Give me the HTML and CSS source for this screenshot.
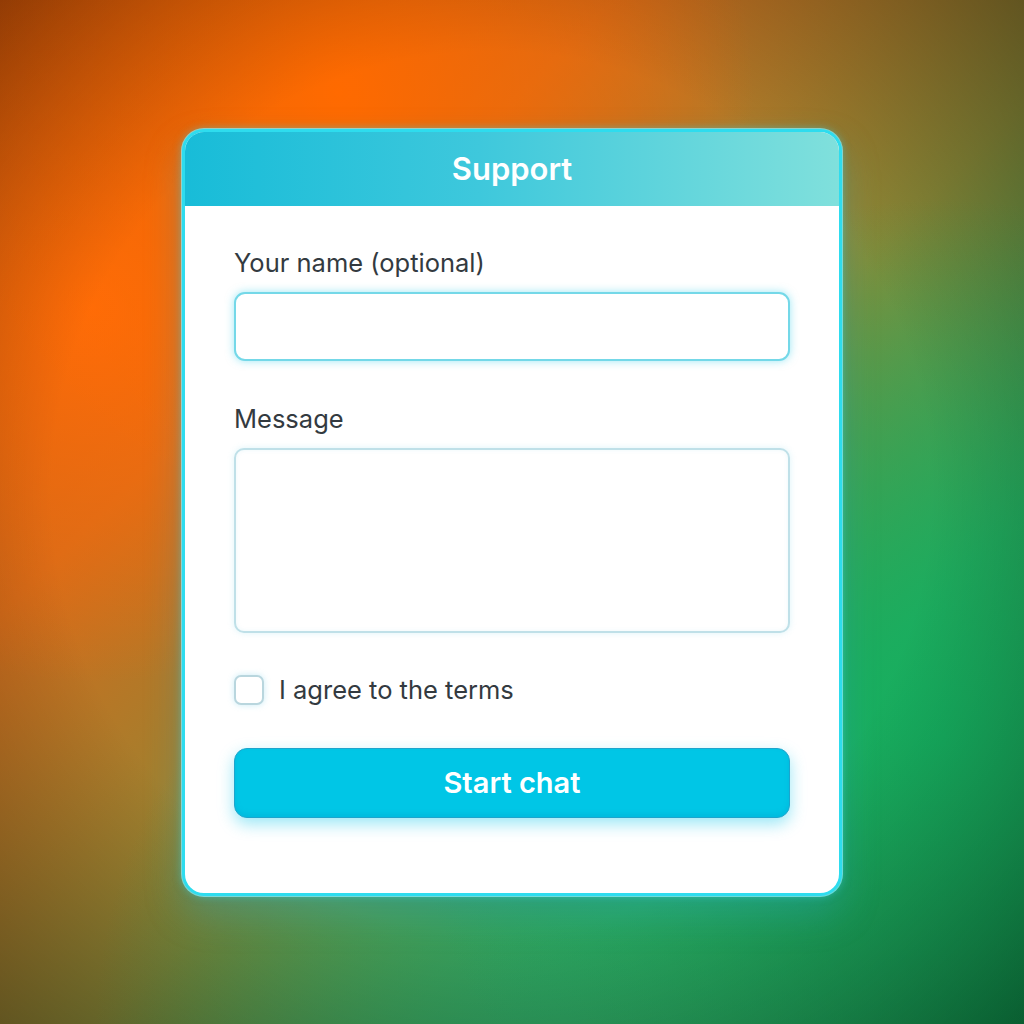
FILE: index.html
```html
<!DOCTYPE html>
<html lang="en">
<head>
<meta charset="utf-8">
<title>Support</title>
<link rel="stylesheet" href="styles.css">
</head>
<body>
<main class="stage">
  <section class="card">
    <header class="card-head">Support</header>
    <form class="card-body">
      <label class="field-label" for="name">Your name (optional)</label>
      <input class="input" id="name" type="text">
      <label class="field-label second" for="msg">Message</label>
      <textarea class="textarea" id="msg"></textarea>
      <label class="check-row">
        <span class="checkbox"></span>
        <span class="check-text">I agree to the terms</span>
      </label>
      <button class="btn" type="button">Start chat</button>
    </form>
  </section>
</main>
</body>
</html>
```
FILE: styles.css
```css
html, body {
  margin: 0;
  padding: 0;
  height: 100%;
}
body {
  font-family: Inter, "Noto Sans", "Liberation Sans", sans-serif;
}
.stage {
  width: 1024px;
  height: 1024px;
  display: flex;
  align-items: center;
  justify-content: center;
  background:
    radial-gradient(ellipse 78% 78% at 48% 48%, rgba(0,0,0,0) 55%, rgba(0,0,0,0.45) 100%),
    radial-gradient(circle at 33% 9%, #ff6a00 0, rgba(255,106,0,0) 36%),
    radial-gradient(circle at 9% 30%, #ff6c08 0, rgba(255,108,8,0) 32%),
    radial-gradient(circle at 92% 72%, #16b060 0, rgba(22,176,96,0) 45%),
    radial-gradient(circle at 55% 100%, #30a060 0, rgba(48,160,96,0) 40%),
    linear-gradient(135deg, #c85008 0%, #d06c1c 30%, #8a8a38 55%, #30a058 75%, #0a8a44 100%);
}
.card {
  width: 654px;
  height: 761px;
  border: 3px solid #2edcee;
  border-radius: 22px;
  background: #fff;
  overflow: hidden;
  box-sizing: content-box;
  box-shadow: 0 0 0 1px rgba(140,240,250,0.7), 0 0 8px rgba(60,220,240,0.5), 0 18px 36px rgba(40,160,190,0.35);
  display: flex;
  flex-direction: column;
}
.card-head {
  height: 74px;
  flex: none;
  display: flex;
  align-items: center;
  justify-content: center;
  color: #fff;
  font-size: 31px;
  font-weight: 600;
  background: linear-gradient(90deg, #18bcd8 0%, #3ec8dc 45%, #80e0dc 100%);
}
.card-body {
  display: flex;
  flex-direction: column;
  padding: 42px 49px 0 49px;
  margin: 0;
}
.field-label {
  font-size: 25.5px;
  line-height: 30px;
  color: #333a40;
  margin-bottom: 14px;
}
.field-label.second {
  margin-top: 43px;
}
.input {
  height: 69px;
  box-sizing: border-box;
  border: 2px solid #74d8e8;
  border-radius: 11px;
  background: #fff;
  box-shadow: 0 0 9px rgba(60,210,235,0.5);
  outline: none;
  font: inherit;
}
.textarea {
  height: 185px;
  box-sizing: border-box;
  border: 2px solid #bfe0e8;
  border-radius: 10px;
  background: #fff;
  box-shadow: 0 0 6px rgba(120,210,230,0.25), inset 0 0 4px rgba(120,200,220,0.15);
  resize: none;
  outline: none;
  font: inherit;
}
.check-row {
  margin-top: 42px;
  display: flex;
  align-items: center;
  gap: 15px;
  height: 30px;
}
.checkbox {
  width: 30px;
  height: 30px;
  box-sizing: border-box;
  border: 2px solid #b9d6de;
  border-radius: 7px;
  background: #fff;
  box-shadow: 0 0 6px rgba(100,200,230,0.35);
}
.check-text {
  font-size: 25.5px;
  color: #333a40;
}
.btn {
  margin-top: 43px;
  height: 70px;
  border: 1.5px solid #1ea4cc;
  border-radius: 13px;
  background: #00c6e6;
  color: #fff;
  font-family: inherit;
  font-size: 29px;
  font-weight: 600;
  box-shadow: 0 6px 16px rgba(0,195,232,0.4), inset 0 -3px 5px rgba(0,150,200,0.25);
}
```
